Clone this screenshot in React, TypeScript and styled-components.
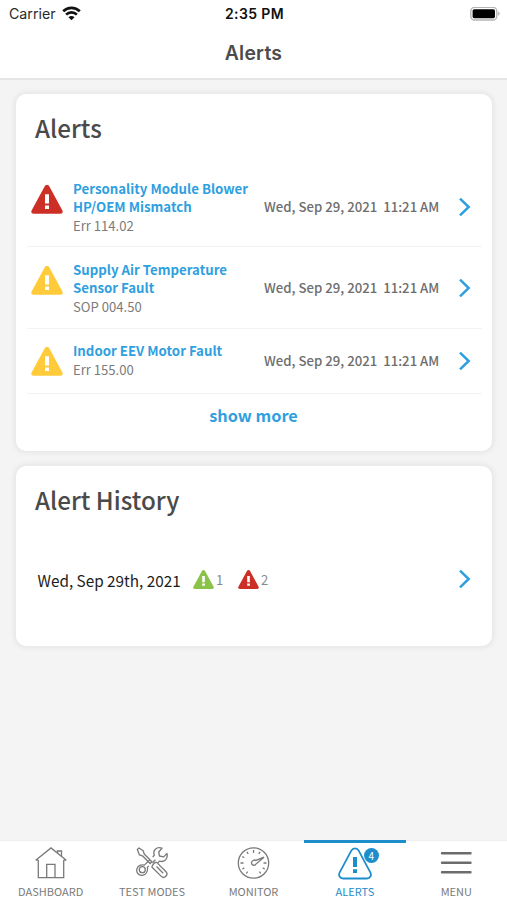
import React from 'react';
import styled, { createGlobalStyle } from 'styled-components';

const sans = `'Noto Sans CJK SC', 'Noto Sans', sans-serif`;
const blue = '#2f9fe0';
const navBlue = '#1e8dcb';

const GlobalStyle = createGlobalStyle`
  * { box-sizing: border-box; }
  html, body { margin: 0; padding: 0; }
  body { background: #f4f4f4; font-family: ${sans}; overflow: hidden; }
  button { font: inherit; background: none; border: 0; padding: 0; margin: 0; cursor: pointer; }
  svg { display: block; flex: none; }
`;

const Screen = styled.div`
  display: flex;
  flex-direction: column;
  width: 507px;
  height: 900px;
  background: #f4f4f4;
`;

const Header = styled.header`
  height: 80px;
  flex: none;
  background: #fff;
  border-bottom: 2px solid #e6e6e6;
  font-family: Inter, sans-serif;
`;

const StatusBar = styled.div`
  display: grid;
  grid-template-columns: 1fr auto 1fr;
  align-items: center;
  height: 27px;
  padding: 0 7px 0 9px;
`;

const Carrier = styled.div`
  display: flex;
  align-items: center;
  gap: 6px;
  font-size: 14.2px;
  line-height: 27px;
  color: #2a2a2a;
`;

const Clock = styled.div`
  font-size: 14px;
  font-weight: 600;
  line-height: 27px;
  letter-spacing: 0.4px;
  color: #111;
`;

const BatterySlot = styled.div`
  justify-self: end;
`;

const ScreenTitle = styled.h1`
  margin: 0;
  padding-top: 13px;
  font-size: 19.4px;
  font-weight: 600;
  line-height: 26px;
  letter-spacing: 0.25px;
  text-align: center;
  color: #4c4c4c;
`;

const Content = styled.main`
  flex: 1;
  display: flex;
  flex-direction: column;
  gap: 15px;
  padding: 14px 15px 0 16px;
`;

const Card = styled.section<{ $height: number }>`
  height: ${(p) => p.$height}px;
  flex: none;
  background: #fff;
  border-radius: 10px;
  box-shadow: 0 0 5px 2px rgba(0, 0, 0, 0.06);
`;

const CardTitle = styled.h2`
  margin: 0;
  padding: 16px 0 0 19px;
  height: 72px;
  font-size: 24.2px;
  font-weight: 500;
  line-height: 36px;
  color: #4a4a4a;
`;

const AlertRow = styled.div<{ $height: number; $offset: number }>`
  display: grid;
  grid-template-columns: 42px 191px 194px 1fr;
  align-items: center;
  height: ${(p) => p.$height}px;
  margin: 0 10px 0 11px;
  padding: ${(p) => p.$offset}px 0 0 4px;
  border-bottom: 1px solid #f3f3f3;
`;

const AlertName = styled.div`
  font-size: 13.25px;
  font-weight: 700;
  line-height: 18px;
  color: ${blue};
`;

const AlertCode = styled.div`
  font-size: 13.1px;
  line-height: 19px;
  color: #7b7b7b;
`;

const Stamp = styled.time`
  font-size: 13.2px;
  font-weight: 500;
  line-height: 18px;
  color: #6e6e6e;
  white-space: pre;
`;

const ShowMore = styled.button`
  display: block;
  width: 100%;
  height: 42px;
  padding-right: 1px;
  font-size: 16.3px;
  font-weight: 700;
  line-height: 42px;
  text-align: center;
  color: ${blue};
`;

const HistoryRow = styled.div`
  display: flex;
  align-items: center;
  height: 82px;
  padding: 0 21px 0 21.5px;
`;

const HistoryDate = styled.div`
  width: 155.5px;
  padding-top: 2px;
  font-size: 15.3px;
  line-height: 22px;
  color: #1c1c1c;
  white-space: nowrap;
`;

const Count = styled.div`
  display: flex;
  align-items: center;
  gap: 2px;
  width: 45px;
  padding-top: 1px;
  font-size: 13px;
  line-height: 20px;
  color: #8a8a8a;
`;

const Spacer = styled.div`
  flex: 1;
`;

const TabBar = styled.nav`
  display: grid;
  grid-template-columns: repeat(5, 1fr);
  height: 60px;
  flex: none;
  background: #fff;
  border-top: 1px solid #eeeeee;
`;

const Tab = styled.button<{ $active?: boolean }>`
  display: flex;
  flex-direction: column;
  align-items: center;
  margin-top: -1px;
  border-top: 3px solid ${(p) => (p.$active ? navBlue : 'transparent')};
  color: ${(p) => (p.$active ? navBlue : '#7a7a7a')};
`;

const TabIcon = styled.div`
  position: relative;
  height: 40px;
  padding-top: 4px;
`;

const TabLabel = styled.span`
  font-size: 11px;
  line-height: 16px;
  white-space: nowrap;
`;

const Badge = styled.span`
  position: absolute;
  top: 5px;
  left: 26px;
  width: 15px;
  height: 15px;
  border-radius: 50%;
  background: ${navBlue};
  color: #fff;
  font-size: 10px;
  line-height: 15px;
  text-align: center;
`;

const Wifi = () => (
  <svg width="19" height="15" viewBox="0 0 19 15" fill="none" stroke="#111" strokeWidth="2.7">
    <path d="M1.2 5.2a11.8 11.8 0 0 1 16.6 0" />
    <path d="M4.1 8.6a7.7 7.7 0 0 1 10.8 0" />
    <path d="M9.500 14.200 6.500 11.200a4.200 4.200 0 0 1 6 0Z" fill="#111" stroke="none" />
  </svg>
);

const Battery = () => (
  <svg width="30" height="14" viewBox="0 0 30 14">
    <rect x="0.8" y="0.4" width="26" height="12.6" rx="3.8" fill="#fff" stroke="#b4b4b4" strokeWidth="1.4" />
    <rect x="2.6" y="2.2" width="22.4" height="9" rx="1.6" fill="#000" />
    <path d="M28.1 4.4c2.2.8 2.2 3.6 0 4.4Z" fill="#b4b4b4" />
  </svg>
);

const Warning = ({ color, width = 32 }: { color: string; width?: number }) => (
  <svg width={width} height={(width * 29) / 32} viewBox="0 0 32 29">
    <path d="M13.6 1.5c1-1.900 3.800-1.900 4.800 0l13 24.100c.9 1.700-.1 3.200-2 3.200H2.600c-1.900 0-2.900-1.500-2-3.200Z" fill={color} />
    <path d="M14 9.300h4v9.300h-4zM14 20.600h4v3.300h-4z" fill="#fff" />
  </svg>
);

const Chevron = () => (
  <svg width="13" height="20" viewBox="0 0 13 20" fill="none" stroke={blue} strokeWidth="2.500">
    <path d="M2 1.700 10.700 10 2 18.300" />
  </svg>
);

const HouseIcon = () => (
  <svg width="32" height="32" viewBox="0 0 32 32" fill="none" stroke="currentColor" strokeWidth="1.300">
    <path d="M3.300 13v17.600h25.400V13" />
    <path d="M.7 13.200 16 .9l15.300 12.300M.7 13.200h2.600M31.300 13.200h-2.600" />
    <path d="M11.700 30.600V17.300h8.300v13.300M22.500 6V4.100h4v5.300M21.700 3.900h5.500" />
  </svg>
);

const ToolsIcon = () => (
  <svg width="32" height="32" viewBox="0 0 32 32" fill="none" stroke="currentColor" strokeWidth="1.300" strokeLinejoin="round">
    <path d="M1.300 2.500 3 1l4.200 2.700 1 3.300 7.700 7.700-1.800 1.800-7.700-7.700-3-1Z" />
    <path d="M16.500 18.700c.7-1.900 2.400-3.500 4.200-3.300l9.300 9.300c2.900 3-1.800 7.600-4.700 4.700l-9.200-9.200c-.4-.5-.1-1 .4-1.500ZM20.500 19.500l6.700 6.700" />
    <path d="m19.400 12.700-3 3M12.700 18.900l-1.300 1.500c.6 4.200-1.500 7.300-5 7.900-3.500.5-6.300-2.600-5.600-6 .6-3.400 3.700-5 7.500-4.200l5.300-5.100M16.700 10l1.600-1.700C16.500 3.500 20.300-.7 26 1.200L22.700 5l.8 4 4.200.9 3.200-3.400c1.600 5.400-3 9.200-7.400 7.600l-1.600 1.600" />
    <circle cx="6.300" cy="22.700" r="3" />
  </svg>
);

const GaugeIcon = () => (
  <svg width="33" height="33" viewBox="0 0 33 33" fill="none" stroke="currentColor" strokeWidth="1.300">
    <circle cx="16.500" cy="16" r="15.200" />
    <path d="M16.500 3v3M10 4.800l1.200 2M23 4.800l-1.200 2M5.300 9.500l2 1.200M3.500 16h3M29.500 16h-3M5.300 22l2-1.100M27.700 22l-2-1.100M9.300 26.500l1.300-1.900M23.700 26.500l-1.300-1.900" />
    <path d="m27 10.200-8.200 3.200c-1.500-1-4.400.3-4.300 2.600.1 2.500 3.500 3.200 4.700.8Z" />
  </svg>
);

const AlertsIcon = () => (
  <svg width="34" height="34" viewBox="0 0 34 34" fill="none" stroke="currentColor" strokeWidth="1.800">
    <path d="M13.300 3.600c1.700-3 5.700-3 7.400 0l11.600 21.700c1.600 3-.1 6.200-3.500 6.200H5.200c-3.400 0-5.100-3.200-3.500-6.200Z" />
    <path d="M17 10v10M17 22.300v3.700" strokeWidth="4" />
  </svg>
);

const MenuIcon = () => (
  <svg width="32" height="32" viewBox="0 0 32 32" stroke="#6c6c6c" strokeWidth="2.400" strokeLinecap="round">
    <path d="M2 6.200h28.500M2 15.700h28.500M2 25.200h28.500" />
  </svg>
);

const red = '#cc2f26';
const yellow = '#ffcb3a';
const green = '#8bc34a';

const alerts = [
  { lines: ['Personality Module Blower', 'HP/OEM Mismatch'], code: 'Err 114.02', color: red, height: 81, offset: 2 },
  { lines: ['Supply Air Temperature', 'Sensor Fault'], code: 'SOP 004.50', color: yellow, height: 82, offset: 1 },
  { lines: ['Indoor EEV Motor Fault'], code: 'Err 155.00', color: yellow, height: 65, offset: 0 },
];

const tabs = [
  { label: 'DASHBOARD', Icon: HouseIcon },
  { label: 'TEST MODES', Icon: ToolsIcon },
  { label: 'MONITOR', Icon: GaugeIcon },
  { label: 'ALERTS', Icon: AlertsIcon, badge: 4 },
  { label: 'MENU', Icon: MenuIcon },
];

const IconCell = styled.div<{ $shift: number }>`
  padding-bottom: ${(p) => p.$shift}px;
`;

const AlertText = styled.div<{ $lift: number }>`
  padding-bottom: ${(p) => p.$lift}px;
`;

export default function App() {
  return (
    <Screen>
      <GlobalStyle />
      <Header>
        <StatusBar>
          <Carrier>
            Carrier
            <Wifi />
          </Carrier>
          <Clock>2:35 PM</Clock>
          <BatterySlot>
            <Battery />
          </BatterySlot>
        </StatusBar>
        <ScreenTitle>Alerts</ScreenTitle>
      </Header>
      <Content>
        <Card $height={357}>
          <CardTitle>Alerts</CardTitle>
          {alerts.map((a) => (
            <AlertRow key={a.code} $height={a.height} $offset={a.offset}>
              <IconCell $shift={a.lines.length > 1 ? 15 : 0}>
                <Warning color={a.color} />
              </IconCell>
              <AlertText $lift={a.lines.length > 1 ? 0 : 2}>
                {a.lines.map((l) => (
                  <AlertName key={l}>{l}</AlertName>
                ))}
                <AlertCode>{a.code}</AlertCode>
              </AlertText>
              <Stamp>{'Wed, Sep 29, 2021  11:21 AM'}</Stamp>
              <Chevron />
            </AlertRow>
          ))}
          <ShowMore>show more</ShowMore>
        </Card>
        <Card $height={180}>
          <CardTitle>Alert History</CardTitle>
          <HistoryRow>
            <HistoryDate>Wed, Sep 29th, 2021</HistoryDate>
            <Count>
              <Warning color={green} width={21} />1
            </Count>
            <Count>
              <Warning color={red} width={21} />2
            </Count>
            <Spacer />
            <Chevron />
          </HistoryRow>
        </Card>
      </Content>
      <TabBar>
        {tabs.map(({ label, Icon, badge }) => (
          <Tab key={label} $active={label === 'ALERTS'}>
            <TabIcon>
              <Icon />
              {badge && <Badge>{badge}</Badge>}
            </TabIcon>
            <TabLabel>{label}</TabLabel>
          </Tab>
        ))}
      </TabBar>
    </Screen>
  );
}
